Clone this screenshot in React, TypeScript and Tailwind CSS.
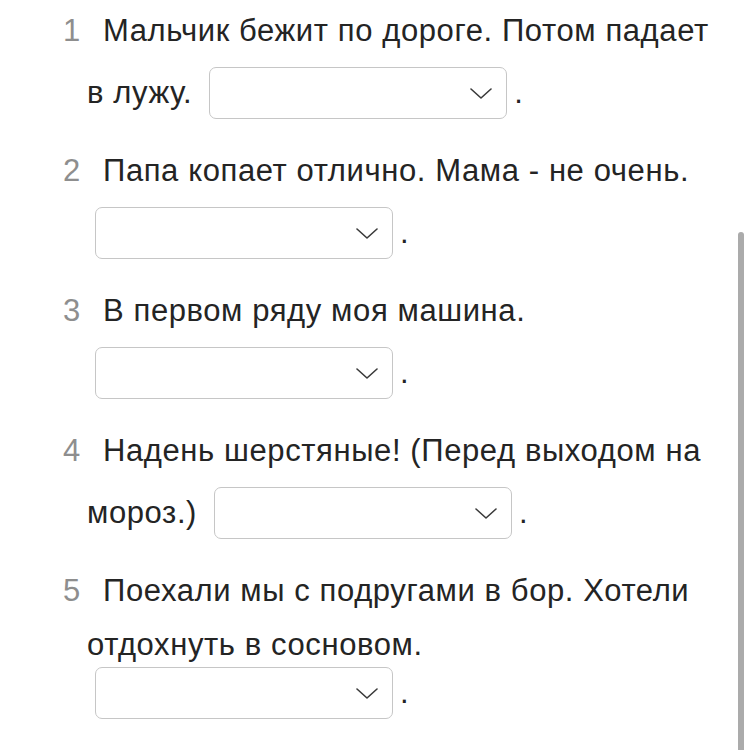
import React from "react";

function Select() {
  return (
    <div className="relative h-[52px] w-[298px] shrink-0 rounded-[7px] border-[1.5px] border-[#c6c6c6] bg-white">
      <svg
        className="absolute right-[14px] top-[20px]"
        width="22"
        height="11"
        viewBox="0 0 22 11"
        fill="none"
      >
        <polyline points="1,1 11,10 21,1" stroke="#3a3a3a" strokeWidth="1.6" strokeLinecap="round" strokeLinejoin="round" />
      </svg>
    </div>
  );
}

function Num({ n }: { n: number }) {
  return <span className="-ml-[24px] inline-block w-[40px] tracking-normal text-[#8e8e8e]">{n}</span>;
}

export default function App() {
  return (
    <div
      className="relative h-[750px] w-[750px] overflow-hidden bg-white pl-[87px] pt-[5px] text-[31px] tracking-[0.6px] text-[#242424]"
      style={{ fontFamily: '"Liberation Sans", Arial, sans-serif' }}
    >
      {/* 1 */}
      <div className="mb-[26px]">
        <div className="h-[52px] whitespace-nowrap leading-[52px]">
          <Num n={1} />Мальчик бежит по дороге. Потом падает
        </div>
        <div className="mt-[10px] flex h-[52px] items-center leading-[52px]">
          <span>в лужу.</span>
          <div className="ml-[17px]"><Select /></div>
          <span className="ml-[7px]">.</span>
        </div>
      </div>
      {/* 2 */}
      <div className="mb-[26px]">
        <div className="h-[52px] whitespace-nowrap leading-[52px]">
          <Num n={2} />Папа копает отлично. Мама - не очень.
        </div>
        <div className="mt-[10px] flex h-[52px] items-center leading-[52px]">
          <div className="ml-[8px]"><Select /></div>
          <span className="ml-[7px]">.</span>
        </div>
      </div>
      {/* 3 */}
      <div className="mb-[26px]">
        <div className="h-[52px] whitespace-nowrap leading-[52px]">
          <Num n={3} />В первом ряду моя машина.
        </div>
        <div className="mt-[10px] flex h-[52px] items-center leading-[52px]">
          <div className="ml-[8px]"><Select /></div>
          <span className="ml-[7px]">.</span>
        </div>
      </div>
      {/* 4 */}
      <div className="mb-[26px]">
        <div className="h-[52px] whitespace-nowrap leading-[52px]">
          <Num n={4} />Надень шерстяные! (Перед выходом на
        </div>
        <div className="mt-[10px] flex h-[52px] items-center leading-[52px]">
          <span>мороз.)</span>
          <div className="ml-[17px]"><Select /></div>
          <span className="ml-[7px]">.</span>
        </div>
      </div>
      {/* 5 */}
      <div>
        <div className="h-[52px] whitespace-nowrap leading-[52px]">
          <Num n={5} />Поехали мы с подругами в бор. Хотели
        </div>
        <div className="mt-[8px] h-[40px] whitespace-nowrap leading-[40px]">отдохнуть в сосновом.</div>
        <div className="mt-[2px] flex h-[52px] items-center leading-[52px]">
          <div className="ml-[8px]"><Select /></div>
          <span className="ml-[7px]">.</span>
        </div>
      </div>

      <div className="absolute right-[6px] top-[232px] h-[530px] w-[6px] rounded-full bg-[#ababab]" />
    </div>
  );
}
